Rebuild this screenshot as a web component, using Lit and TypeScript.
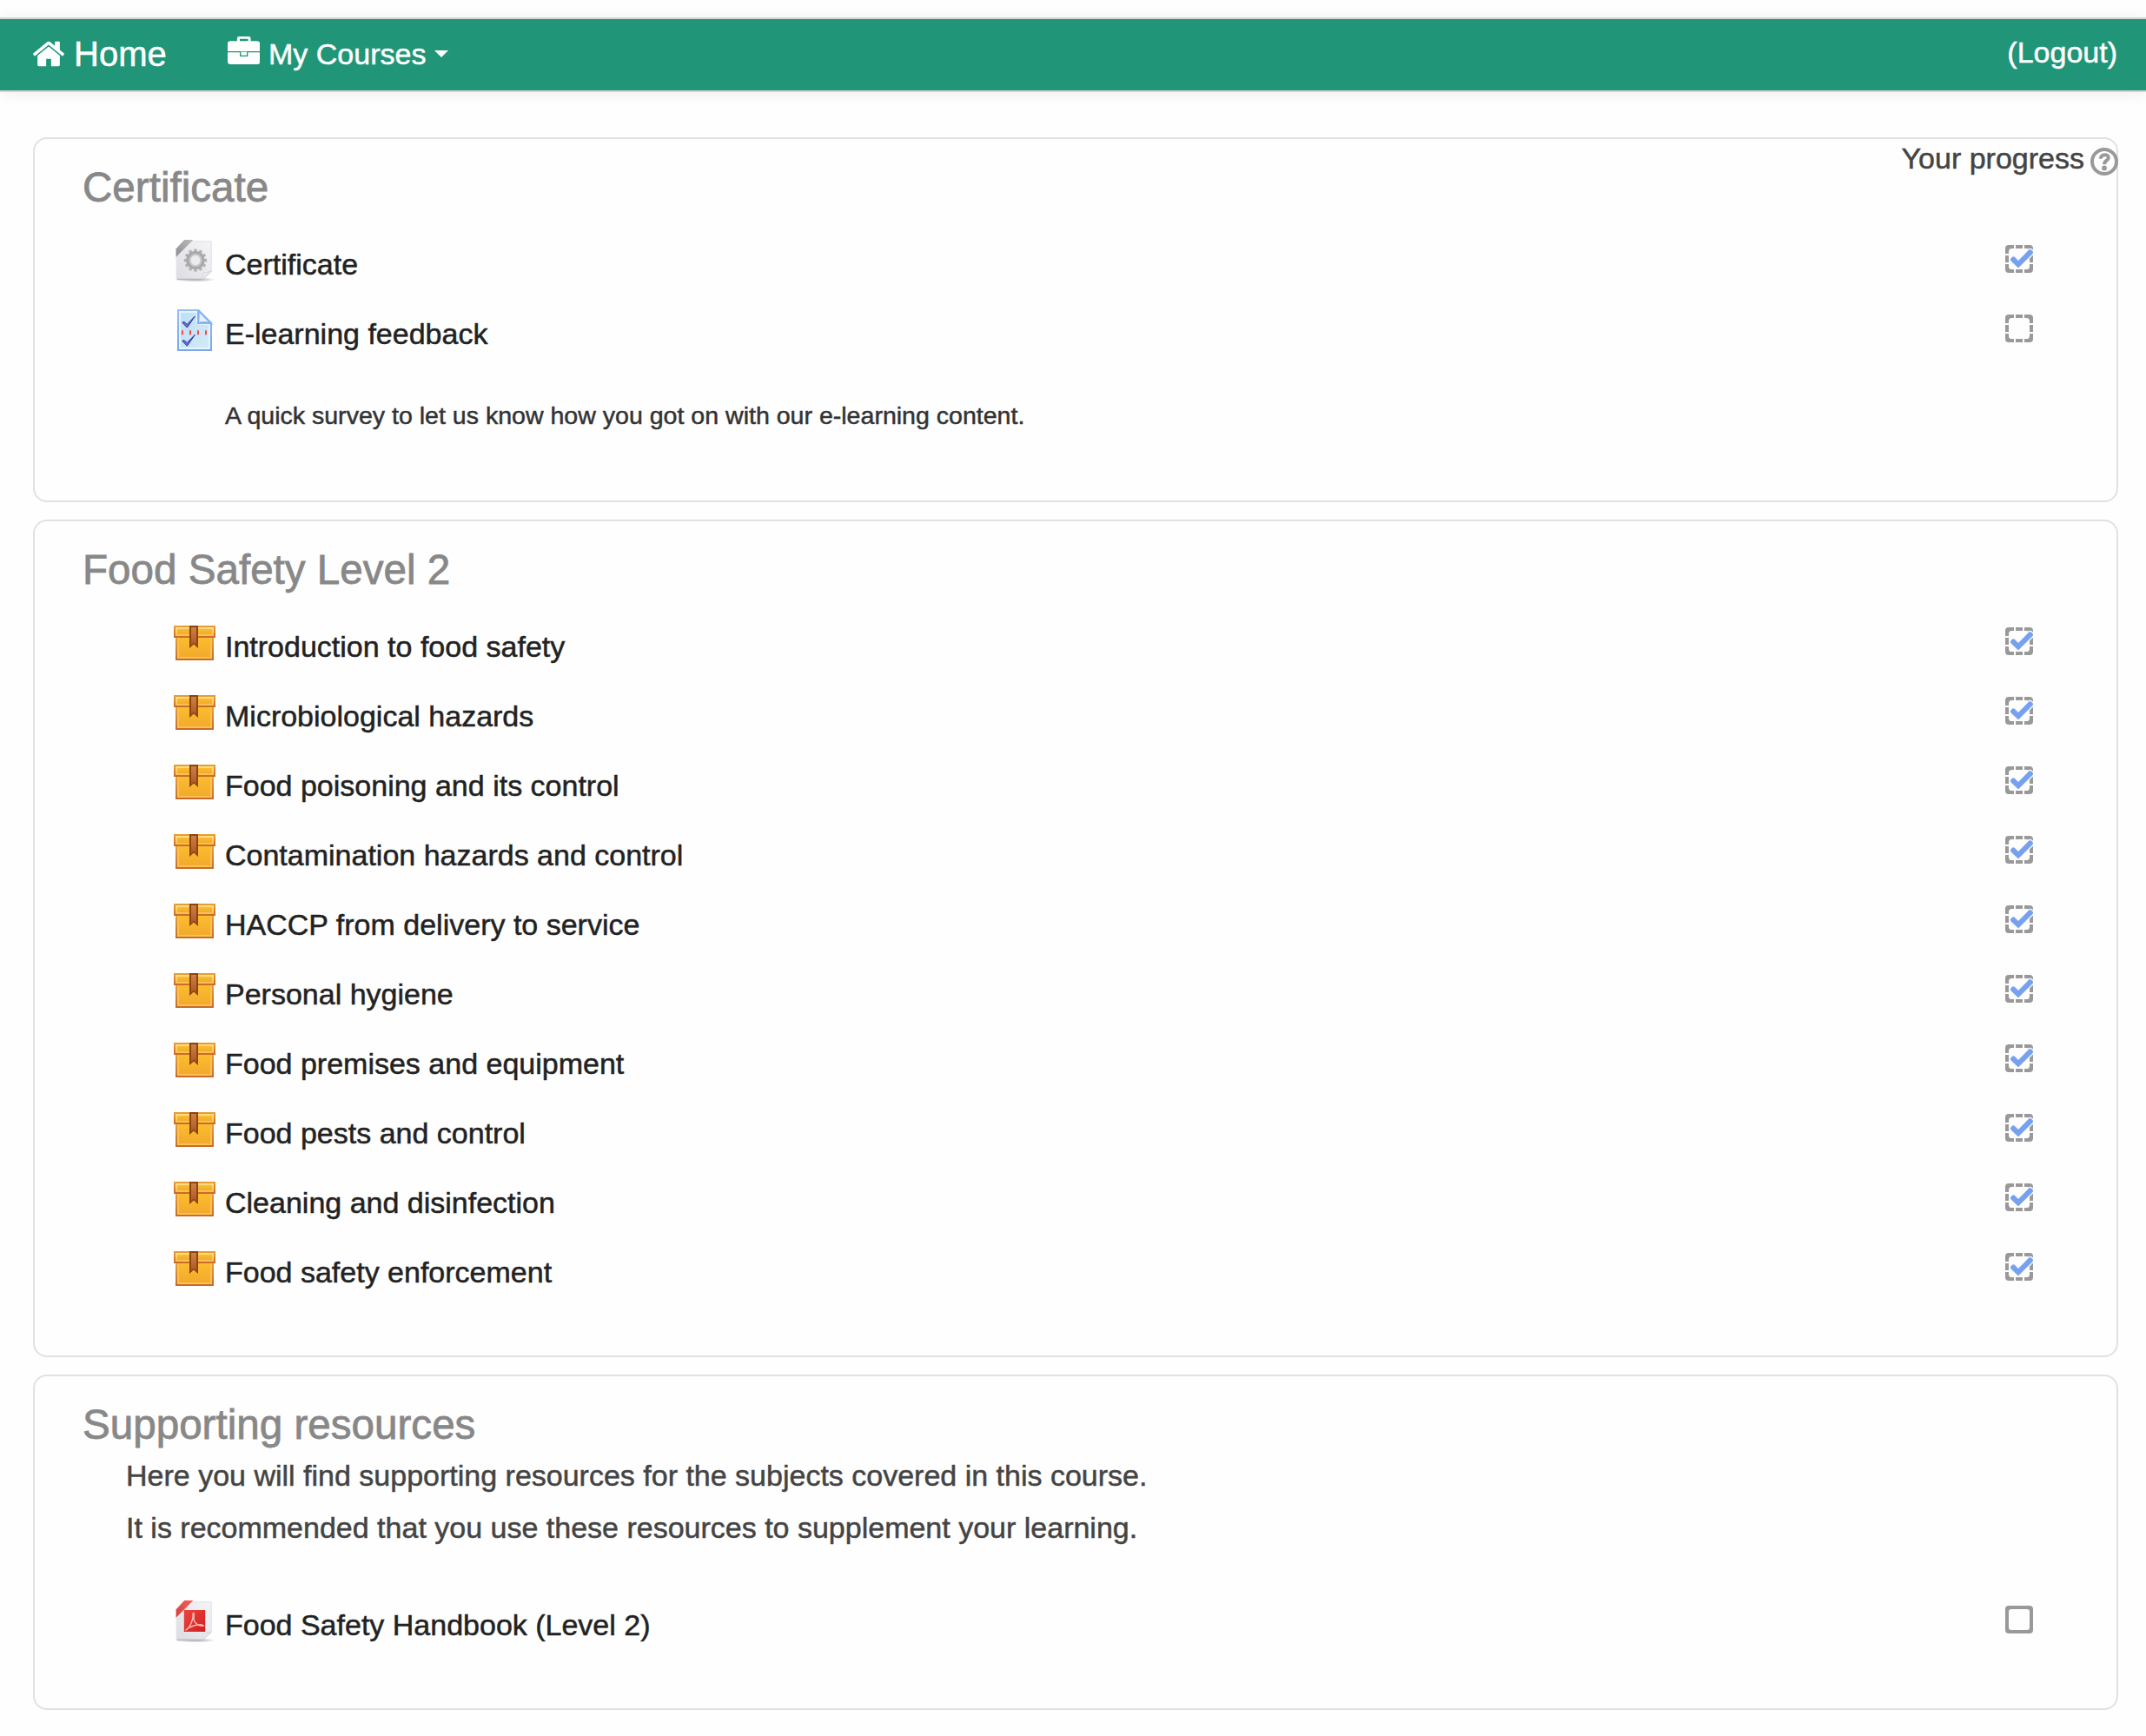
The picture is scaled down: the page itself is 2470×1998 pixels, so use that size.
import { LitElement, html, css, svg, nothing } from "lit";
import { customElement, property } from "lit/decorators.js";

type IconKind = "package" | "gear" | "survey" | "pdf";
type Progress = "auto-done" | "auto-open" | "manual-open";

interface Activity {
  icon: IconKind;
  title: string;
  progress: Progress;
  note?: string;
}

interface Section {
  title: string;
  summary?: string[];
  activities: Activity[];
}

const lessons = [
  "Introduction to food safety",
  "Microbiological hazards",
  "Food poisoning and its control",
  "Contamination hazards and control",
  "HACCP from delivery to service",
  "Personal hygiene",
  "Food premises and equipment",
  "Food pests and control",
  "Cleaning and disinfection",
  "Food safety enforcement",
];

const sections: Section[] = [
  {
    title: "Certificate",
    activities: [
      { icon: "gear", title: "Certificate", progress: "auto-done" },
      {
        icon: "survey",
        title: "E-learning feedback",
        progress: "auto-open",
        note: "A quick survey to let us know how you got on with our e-learning content.",
      },
    ],
  },
  {
    title: "Food Safety Level 2",
    activities: lessons.map((title) => ({ icon: "package", title, progress: "auto-done" })),
  },
  {
    title: "Supporting resources",
    summary: [
      "Here you will find supporting resources for the subjects covered in this course.",
      "It is recommended that you use these resources to supplement your learning.",
    ],
    activities: [{ icon: "pdf", title: "Food Safety Handbook (Level 2)", progress: "manual-open" }],
  },
];

/* Sheet of paper with a coloured band across its corner and a folded lower edge. */
const paper = (bandFrom: string, bandTo: string) => svg`
  <defs>
    <linearGradient id="sheet" x1="0" y1="1" x2="1" y2="0">
      <stop offset="0" stop-color="#dcdce3"></stop>
      <stop offset=".5" stop-color="#e8e8ee"></stop>
      <stop offset="1" stop-color="#f5f5f8"></stop>
    </linearGradient>
    <linearGradient id="band" x1="0" y1="1" x2="1" y2="0">
      <stop offset="0" stop-color=${bandFrom}></stop>
      <stop offset="1" stop-color=${bandTo}></stop>
    </linearGradient>
    <linearGradient id="fold" x1="0" y1="0" x2="1" y2="1">
      <stop offset="0" stop-color="#ffffff"></stop>
      <stop offset="1" stop-color="#c9c9cf"></stop>
    </linearGradient>
    <radialGradient id="ground">
      <stop offset="0" stop-color="#9c9c9c"></stop>
      <stop offset="1" stop-color="#9c9c9c" stop-opacity="0"></stop>
    </radialGradient>
  </defs>
  <ellipse cx="12.4" cy="22.9" rx="11.6" ry="1.3" fill="url(#ground)"></ellipse>
  <path d="M6 .9H21.6V18.3L16.6 22.9H1.6V5z" fill="url(#sheet)" stroke="#dedee5" stroke-width=".5"></path>
  <path d="M2 22.7H16.6" stroke="#b5b5bc" stroke-width=".7"></path>
  <path d="M21.6 18L16.4 23 17 19.2z" fill="url(#fold)" stroke="#c6c6cd" stroke-width=".3"></path>
  <path d="M6.1 0H11.2L1.3 9.9V5.2z" fill="url(#band)"></path>
`;

const teeth = Array.from({ length: 12 }, (_, i) => i * 30);

const icons = {
  package: svg`
    <defs>
      <linearGradient id="edge" x1="0" y1="0" x2="0" y2="1">
        <stop offset="0" stop-color="#e9a133"></stop>
        <stop offset="1" stop-color="#c9682a"></stop>
      </linearGradient>
      <linearGradient id="fill" x1="0" y1="0" x2="0" y2="1">
        <stop offset="0" stop-color="#fcbc2f"></stop>
        <stop offset="1" stop-color="#f2aa2c"></stop>
      </linearGradient>
      <linearGradient id="lid" x1="0" y1="0" x2="0" y2="1">
        <stop offset="0" stop-color="#fee08a"></stop>
        <stop offset="1" stop-color="#f8bf48"></stop>
      </linearGradient>
      <linearGradient id="ribbon" x1="0" y1="0" x2="0" y2="1">
        <stop offset="0" stop-color="#cf8044"></stop>
        <stop offset="1" stop-color="#ad5728"></stop>
      </linearGradient>
    </defs>
    <rect x="1" y="8" width="22" height="14" fill="url(#edge)"></rect>
    <rect x="2" y="9" width="20" height="12" fill="#f9c150"></rect>
    <rect x="3" y="9" width="18" height="11" fill="url(#fill)"></rect>
    <rect x="0" y="2" width="24" height="7" fill="url(#edge)"></rect>
    <rect x="1" y="3" width="22" height="5" fill="url(#lid)"></rect>
    <rect x="2" y="4" width="20" height="3" fill="url(#fill)"></rect>
    <path d="M9 2H14V15L11.5 12.8 9 15z" fill="#8b4513"></path>
    <path d="M10 3H13V13.1L11.5 11.8 10 13.1z" fill="url(#ribbon)"></path>
  `,
  gear: svg`
    ${paper("#8d8d8d", "#bcbcbc")}
    <g fill="#b3b3b3">
      ${teeth.map((a) => svg`<rect x="11.6" y="5.2" width="1.8" height="3" rx=".5" transform="rotate(${a} 12.5 11.8)"></rect>`)}
    </g>
    <circle cx="12.5" cy="11.8" r="4.1" fill="#ececef" stroke="#a8a8a8" stroke-width="2.4"></circle>
    <circle cx="12.5" cy="11.8" r="3.3" fill="none" stroke="#cbcbcb" stroke-width=".9"></circle>
  `,
  survey: svg`
    <defs>
      <linearGradient id="page" x1="0" y1="0" x2="1" y2="1">
        <stop offset="0" stop-color="#bce1f5"></stop>
        <stop offset="1" stop-color="#d2eaf8"></stop>
      </linearGradient>
      <linearGradient id="rim" x1="0" y1="0" x2="0" y2="1">
        <stop offset="0" stop-color="#93bef7"></stop>
        <stop offset="1" stop-color="#7ba6e8"></stop>
      </linearGradient>
    </defs>
    <path d="M2 0H14.4L22 7.6V24H2z" fill="url(#rim)"></path>
    <path d="M3 1H13.5V8.5H21V23H3z" fill="#e6f4fd"></path>
    <path d="M4 2H13V9H20V22H4z" fill="url(#page)"></path>
    <path d="M13.9 .6L21.4 8.1Q17 6.9 13.9 8.1Q14.9 4 13.9 .6z" fill="#e3f2fc" stroke="#82b1f2" stroke-width=".9"></path>
    <g fill="#6a6ee0" stroke="#30309f" stroke-width=".5">
      <path d="M4.9 7.6L6 7.1 7.6 8.7 12.2 4 7.7 10.5z"></path>
      <path d="M4.9 18.2L6 17.7 7.6 19.3 12.2 14.6 7.7 21.1z"></path>
    </g>
    <path d="M5 12.1v2.5M9.5 12.1v2.5M14 12.1v2.5M18.5 12.1v2.5" stroke="#ff4747"></path>
  `,
  pdf: svg`
    ${paper("#d83c38", "#f2625c")}
    <defs>
      <linearGradient id="tile" x1="0" y1="0" x2="1" y2="1">
        <stop offset="0" stop-color="#ee453e"></stop>
        <stop offset="1" stop-color="#cf1f20"></stop>
      </linearGradient>
    </defs>
    <rect x="5.9" y="5.5" width="12.2" height="12.5" fill="url(#tile)"></rect>
    <path d="M11 7.2C12.2 7 11.2 9.8 11.6 11.3C12.3 13.6 15 15 17.2 14.6C16 13 9.6 14.6 7 17C8.6 16.6 11.6 11.4 11 7.2" fill="none" stroke="#fbb5b0" stroke-width=".75" stroke-linejoin="round"></path>
  `,
};

const tick =
  "M15.7 3.6l-.7-.7c-.4-.4-1-.4-1.4 0L7.5 9.1 5.4 7c-.4-.4-1-.4-1.4 0l-.7.7c-.4.4-.4 1 0 1.4l4.2 4 8.2-8.1c.4-.4.4-1 0-1.4z";

const dashedBox = svg`
  <path fill="#999" d="M2 0H5V2H3.8Q2 2 2 3.8V5H0V2Q0 0 2 0zM6 0h4v2H6zM11 0h3q2 0 2 2v3h-2V3.8Q14 2 12.2 2H11zM0 6h2v4H0zM14 6h2v4h-2zM0 11h2v1.2Q2 14 3.8 14H5v2H2q-2 0-2-2zM6 14h4v2H6zM14 11h2v3q0 2-2 2h-3v-2h1.2Q14 14 14 12.2z"></path>
`;

@customElement("progress-box")
class ProgressBox extends LitElement {
  @property() state: Progress = "auto-open";

  static styles = css`
    :host {
      display: block;
      width: 32px;
      height: 32px;
    }
    svg {
      display: block;
    }
  `;

  render() {
    return html`<svg width="32" height="32" viewBox="0 0 16 16">
      ${this.state === "manual-open"
        ? svg`<path fill="#999" fill-rule="evenodd" d="M2 0H14Q16 0 16 2V14Q16 16 14 16H2Q0 16 0 14V2Q0 0 2 0zM3.5 2Q2 2 2 3.5V12.5Q2 14 3.5 14H12.5Q14 14 14 12.5V3.5Q14 2 12.5 2z"></path>`
        : dashedBox}
      ${this.state === "auto-done"
        ? svg`<path d=${tick} fill="#fefefe" stroke="#fefefe" stroke-width="1.4"></path><path d=${tick} fill="#76a1f0" stroke="#76a1f0" stroke-width=".2"></path>`
        : nothing}
    </svg>`;
  }
}

@customElement("activity-icon")
class ActivityIcon extends LitElement {
  @property() kind: IconKind = "package";

  static styles = css`
    :host {
      display: block;
      width: 48px;
      height: 48px;
    }
    svg {
      display: block;
    }
  `;

  render() {
    return html`<svg width="48" height="48" viewBox="0 0 24 24">${icons[this.kind]}</svg>`;
  }
}

@customElement("app-root")
class AppRoot extends LitElement {
  static styles = css`
    :host {
      display: block;
      box-sizing: border-box;
      min-height: 1998px;
      padding-top: 20px;
      background: #fefefe;
      font-family: "Liberation Sans", Arial, Helvetica, sans-serif;
      font-size: 34px;
      line-height: 40px;
      color: #444;
      -webkit-text-stroke-width: 0.5px;
    }
    svg {
      display: block;
      flex: none;
    }
    .navbar {
      box-sizing: border-box;
      height: 86px;
      display: flex;
      align-items: flex-start;
      padding: 0 33px 0 36px;
      background: #209577;
      border-top: 2px solid #d4d4d4;
      border-bottom: 2px solid #d4d4d4;
      box-shadow: 0 2px 16px rgba(0, 0, 0, 0.065);
      color: #fff;
    }
    .home {
      display: flex;
      align-items: flex-start;
      gap: 9px;
      margin-top: 18px;
      font-size: 40px;
      line-height: 44px;
    }
    .home-icon {
      margin-top: 1.7px;
    }
    .courses {
      display: flex;
      align-items: flex-start;
      margin: 20px auto 0 70px;
      line-height: 38px;
    }
    .courses-label {
      margin: 1px 10px 0 10px;
    }
    .clasp {
      stroke: #209577;
      stroke-width: 64px;
    }
    .caret {
      margin-top: 16px;
      border: 8px solid transparent;
      border-top-color: #fff;
      border-bottom: 0;
    }
    .logout {
      margin-top: 19px;
      line-height: 38px;
    }
    .sections {
      display: flex;
      flex-direction: column;
      gap: 20px;
      padding: 52px 32px 0 38px;
    }
    .card {
      position: relative;
      border: 2px solid #e1e1e1;
      border-radius: 16px;
      padding: 26px 96px 50px 55px;
    }
    .card-title {
      margin: 0;
      font-size: 47.6px;
      font-weight: 400;
      line-height: 60px;
      color: #888;
      -webkit-text-stroke-width: 0.8px;
    }
    .summary {
      margin: -2px 0 48px 50px;
      line-height: 60px;
    }
    .line {
      margin: 0;
    }
    .activities {
      margin: 24px 0 0 105px;
    }
    .summary + .activities {
      margin-top: 0;
    }
    .row {
      display: flex;
      align-items: flex-start;
      height: 80px;
      color: #222;
    }
    .icon {
      margin-top: 6px;
    }
    .name {
      flex: 1;
      margin: 14px 0 0 11px;
    }
    .mark {
      margin-top: 12px;
    }
    .note {
      margin: 28px 0 28px 59px;
      font-size: 28.55px;
      color: #333;
    }
    /* The progress caption overlaps the corner of the first card. */
    .caption {
      position: absolute;
      top: 2px;
      right: -2px;
      display: flex;
      align-items: flex-start;
      gap: 7px;
    }
    .help {
      margin-top: 8px;
    }
  `;

  private renderSection(section: Section, index: number) {
    return html`<section class="card">
      ${index === 0
        ? html`<div class="caption">
            <span>Your progress</span>
            <svg class="help" width="32" height="32" viewBox="0 0 16 16">
              <circle cx="8" cy="8" r="7" fill="none" stroke="#999" stroke-width="2"></circle>
              <path d="M5.9 6.4C5.8 3.4 10.5 3.4 10.4 5.8C10.3 7.5 8.1 7.2 8 9.6" fill="none" stroke="#999" stroke-width="2"></path>
              <circle cx="8" cy="11.7" r="1.45" fill="#999"></circle>
            </svg>
          </div>`
        : nothing}
      <h3 class="card-title">${section.title}</h3>
      ${section.summary
        ? html`<div class="summary">${section.summary.map((t) => html`<p class="line">${t}</p>`)}</div>`
        : nothing}
      <div class="activities">
        ${section.activities.map(
          (a) => html`<div class="row">
              <activity-icon class="icon" .kind=${a.icon}></activity-icon>
              <span class="name">${a.title}</span>
              <progress-box class="mark" .state=${a.progress}></progress-box>
            </div>
            ${a.note ? html`<div class="note">${a.note}</div>` : nothing}`
        )}
      </div>
    </section>`;
  }

  render() {
    return html`
      <nav class="navbar">
        <div class="home">
          <svg class="home-icon" width="40" height="40" viewBox="0 0 1792 1792" fill="#fff">
            <path d="M1472 992v480q0 26-19 45t-45 19h-384v-384h-256v384h-384q-26 0-45-19t-19-45v-480q0-1 .5-3t.5-3l575-474 575 474q1 2 1 6zm223-69l-62 74q-8 9-21 11h-3q-13 0-21-7l-692-577-692 577q-12 8-24 7-13-2-21-11l-62-74q-8-10-7-23.5t11-21.5l719-599q32-26 76-26t76 26l244 204v-195q0-14 9-23t23-9h192q14 0 23 9t9 23v408l219 182q10 8 11 21.5t-7 23.5z"></path>
          </svg>
          <span>Home</span>
        </div>
        <div class="courses">
          <svg width="37.33" height="32" viewBox="0 0 1792 1536" fill="#fff">
            <path fill-rule="evenodd" d="M160 256H523V110Q523 0 633 0H1167Q1277 0 1277 110V256H1632Q1792 256 1792 416V1376Q1792 1536 1632 1536H160Q0 1536 0 1376V416Q0 256 160 256zM672 256H1130V130H672z"></path>
            <path class="clasp" d="M0 850H1792"></path>
            <path class="clasp" d="M704 850V1072H1088V850"></path>
          </svg>
          <span class="courses-label">My Courses</span>
          <span class="caret"></span>
        </div>
        <span class="logout">(Logout)</span>
      </nav>
      <main class="sections">${sections.map((s, i) => this.renderSection(s, i))}</main>
    `;
  }
}
